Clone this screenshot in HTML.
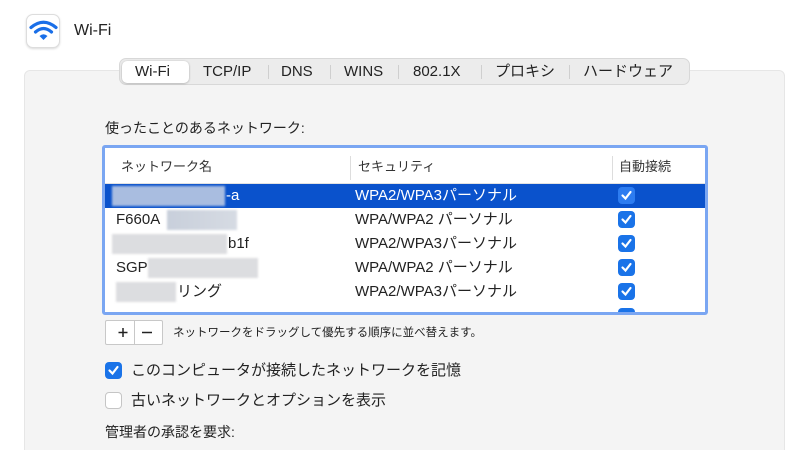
<!DOCTYPE html>
<html><head><meta charset="utf-8"><style>
*{margin:0;padding:0;box-sizing:border-box}
html,body{width:810px;height:450px;overflow:hidden}
body{background:#fff;position:relative;font-family:"Liberation Sans","Noto Sans CJK JP",sans-serif;color:#222}
.a{position:absolute;white-space:nowrap}
.panel{left:24px;top:70px;width:761px;height:390px;background:#f4f4f4;border:1px solid #e6e6e6;border-radius:6px}
.tabs{left:119px;top:58px;width:571px;height:27px;background:#ececec;border:1px solid #d8d8d8;border-radius:7px;font-size:15px;color:#222}
.tab{position:absolute;top:0;line-height:25px;height:25px}
.sep{position:absolute;top:6px;width:1px;height:14px;background:#cfcfcf}
.sel{position:absolute;left:2px;top:2px;width:67px;height:22px;background:#fff;border-radius:5px;box-shadow:0 0.5px 2px rgba(0,0,0,.3)}
.table{left:102px;top:145px;width:606px;height:170px;border:3px solid #7aa6f2;border-radius:3px;background:#fff;overflow:hidden}
.row{position:absolute;left:0;width:600px;height:24px;font-size:15px;line-height:24px}
.row .a{top:0;line-height:24px;height:24px}
.blur{position:absolute;background:linear-gradient(90deg,#c8cfdb,#d6dbe3);filter:blur(1px)}
.cb{position:absolute;width:17px;height:17px;border-radius:4px;background:#1a73e8}
.cb svg{position:absolute;left:2px;top:2px}
.l{line-height:20px;height:20px}
</style></head><body>
<div class="a" style="left:26px;top:14px;width:34px;height:34px;background:#fff;border:1px solid #ddd;border-radius:7px;box-shadow:0 1px 2px rgba(0,0,0,.15)">
<svg width="34" height="34" viewBox="0 0 34 34"><g fill="none" stroke="#1a6fe8" stroke-width="3.2" stroke-linecap="round"><path d="M4 12.5 Q16.5 2 29 12.5"/><path d="M8.5 17 Q16.5 10 24.5 17"/></g><path d="M12.5 21 Q16.5 17.5 20.5 21 L16.5 25 Z" fill="#1a6fe8"/></svg></div>
<div class="a l" style="left:74px;top:21px;font-size:16px">Wi-Fi</div>
<div class="a panel"></div>
<div class="a tabs">
<div class="sel"></div>
<div class="tab" style="left:15px">Wi-Fi</div>
<div class="tab" style="left:83px">TCP/IP</div><div class="sep" style="left:148px"></div>
<div class="tab" style="left:161px">DNS</div><div class="sep" style="left:210px"></div>
<div class="tab" style="left:224px">WINS</div><div class="sep" style="left:278px"></div>
<div class="tab" style="left:293px">802.1X</div><div class="sep" style="left:361px"></div>
<div class="tab" style="left:375px">プロキシ</div><div class="sep" style="left:449px"></div>
<div class="tab" style="left:463px">ハードウェア</div>
</div>
<div class="a l" style="left:105px;top:118px;font-size:14px">使ったことのあるネットワーク:</div>
<div class="a table">
<div class="a l" style="left:16px;top:9px;font-size:13px;color:#333">ネットワーク名</div>
<div class="a" style="left:245px;top:8px;width:1px;height:24px;background:#ddd"></div>
<div class="a l" style="left:253px;top:9px;font-size:13px;color:#333">セキュリティ</div>
<div class="a" style="left:507px;top:8px;width:1px;height:24px;background:#ddd"></div>
<div class="a l" style="left:514px;top:9px;font-size:13px;color:#333">自動接続</div>
<div class="a" style="left:0;top:35px;width:600px;height:1px;background:#e2e2e2"></div>
<div class="row" style="top:36px;background:#0a52cc;color:#fff"><div class="blur" style="left:7px;top:2px;width:113px;height:20px;background:#a9bde0"></div><div class="a" style="left:121px">-a</div><div class="a" style="left:250px">WPA2/WPA3パーソナル</div><div class="cb" style="left:513px;top:3px;background:#2d7cf0"><svg width="13" height="13"><path d="M2.5 6.5 L5.5 9.5 L10.5 3" stroke="#fff" stroke-width="2.2" fill="none" stroke-linecap="round"/></svg></div></div>
<div class="row" style="top:60px"><div class="a" style="left:11px">F660A</div><div class="blur" style="left:62px;top:2px;width:70px;height:20px"></div><div class="a" style="left:250px">WPA/WPA2 パーソナル</div><div class="cb" style="left:513px;top:3px"><svg width="13" height="13"><path d="M2.5 6.5 L5.5 9.5 L10.5 3" stroke="#fff" stroke-width="2.2" fill="none" stroke-linecap="round"/></svg></div></div>
<div class="row" style="top:84px"><div class="blur" style="left:7px;top:2px;width:115px;height:20px;background:#dcdde0"></div><div class="a" style="left:123px">b1f</div><div class="a" style="left:250px">WPA2/WPA3パーソナル</div><div class="cb" style="left:513px;top:3px"><svg width="13" height="13"><path d="M2.5 6.5 L5.5 9.5 L10.5 3" stroke="#fff" stroke-width="2.2" fill="none" stroke-linecap="round"/></svg></div></div>
<div class="row" style="top:108px"><div class="a" style="left:11px">SGP</div><div class="blur" style="left:43px;top:2px;width:110px;height:20px;background:#dcdde0"></div><div class="a" style="left:250px">WPA/WPA2 パーソナル</div><div class="cb" style="left:513px;top:3px"><svg width="13" height="13"><path d="M2.5 6.5 L5.5 9.5 L10.5 3" stroke="#fff" stroke-width="2.2" fill="none" stroke-linecap="round"/></svg></div></div>
<div class="row" style="top:132px"><div class="blur" style="left:11px;top:2px;width:60px;height:20px;background:#dcdde0"></div><div class="a" style="left:72px">リング</div><div class="a" style="left:250px">WPA2/WPA3パーソナル</div><div class="cb" style="left:513px;top:3px"><svg width="13" height="13"><path d="M2.5 6.5 L5.5 9.5 L10.5 3" stroke="#fff" stroke-width="2.2" fill="none" stroke-linecap="round"/></svg></div></div>
<div class="cb" style="left:513px;top:160px"></div>
</div>
<div class="a" style="left:105px;top:320px;width:58px;height:25px;border:1px solid #c8c8c8;background:#fff;border-radius:2px"></div>
<div class="a" style="left:134px;top:320px;width:1px;height:25px;background:#c8c8c8"></div>
<svg class="a" style="left:105px;top:320px" width="58" height="25"><path d="M13.5 12.5h9M18 8v9M37 12.5h10" stroke="#222" stroke-width="1.5"/></svg>
<div class="a l" style="left:173px;top:323px;font-size:11.5px">ネットワークをドラッグして優先する順序に並べ替えます。</div>
<div class="cb a" style="left:105px;top:362px"><svg width="13" height="13"><path d="M2.5 6.5 L5.5 9.5 L10.5 3" stroke="#fff" stroke-width="2.2" fill="none" stroke-linecap="round"/></svg></div>
<div class="a l" style="left:131px;top:361px;font-size:15px">このコンピュータが接続したネットワークを記憶</div>
<div class="a" style="left:105px;top:392px;width:17px;height:17px;border:1px solid #c5c5c5;background:#fff;border-radius:4px"></div>
<div class="a l" style="left:131px;top:391px;font-size:15px">古いネットワークとオプションを表示</div>
<div class="a l" style="left:105px;top:422px;font-size:14px">管理者の承認を要求:</div>
</body></html>
